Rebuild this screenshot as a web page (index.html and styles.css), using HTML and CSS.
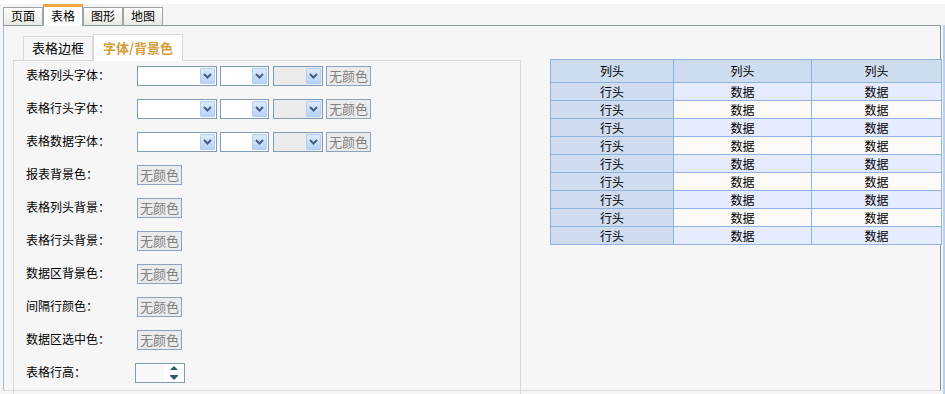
FILE: index.html
```html
<!DOCTYPE html>
<html lang="zh-CN">
<head>
<meta charset="UTF-8">
<title>表格设置</title>
<link rel="stylesheet" href="styles.css">
</head>
<body>

<!-- TOP TABS -->
<div class="tabs">
  <div class="tab">页面</div>
  <div class="tab active">表格</div>
  <div class="tab">图形</div>
  <div class="tab">地图</div>
</div>

<div class="panel">
  <!-- SETTINGS -->
  <div class="left">
    <div class="subtabs">
      <div class="subtab">表格边框</div>
      <div class="subtab active">字体/背景色</div>
    </div>
    <div class="form">
      <div class="row">
        <span class="label">表格列头字体：</span>
        <div class="sel w80"><span class="arrow"><svg width="9" height="6" viewBox="0 0 9 6"><polyline points="1,1 4.5,4.5 8,1" fill="none" stroke="#4a5d80" stroke-width="2"/></svg></span></div>
        <div class="sel w48"><span class="arrow"><svg width="9" height="6" viewBox="0 0 9 6"><polyline points="1,1 4.5,4.5 8,1" fill="none" stroke="#4a5d80" stroke-width="2"/></svg></span></div>
        <div class="sel w49 off"><span class="arrow"><svg width="9" height="6" viewBox="0 0 9 6"><polyline points="1,1 4.5,4.5 8,1" fill="none" stroke="#4a5d80" stroke-width="2"/></svg></span></div>
        <button class="nocolor gap">无颜色</button>
      </div>
      <div class="row">
        <span class="label">表格行头字体：</span>
        <div class="sel w80"><span class="arrow"><svg width="9" height="6" viewBox="0 0 9 6"><polyline points="1,1 4.5,4.5 8,1" fill="none" stroke="#4a5d80" stroke-width="2"/></svg></span></div>
        <div class="sel w48"><span class="arrow"><svg width="9" height="6" viewBox="0 0 9 6"><polyline points="1,1 4.5,4.5 8,1" fill="none" stroke="#4a5d80" stroke-width="2"/></svg></span></div>
        <div class="sel w49 off"><span class="arrow"><svg width="9" height="6" viewBox="0 0 9 6"><polyline points="1,1 4.5,4.5 8,1" fill="none" stroke="#4a5d80" stroke-width="2"/></svg></span></div>
        <button class="nocolor gap">无颜色</button>
      </div>
      <div class="row">
        <span class="label">表格数据字体：</span>
        <div class="sel w80"><span class="arrow"><svg width="9" height="6" viewBox="0 0 9 6"><polyline points="1,1 4.5,4.5 8,1" fill="none" stroke="#4a5d80" stroke-width="2"/></svg></span></div>
        <div class="sel w48"><span class="arrow"><svg width="9" height="6" viewBox="0 0 9 6"><polyline points="1,1 4.5,4.5 8,1" fill="none" stroke="#4a5d80" stroke-width="2"/></svg></span></div>
        <div class="sel w49 off"><span class="arrow"><svg width="9" height="6" viewBox="0 0 9 6"><polyline points="1,1 4.5,4.5 8,1" fill="none" stroke="#4a5d80" stroke-width="2"/></svg></span></div>
        <button class="nocolor gap">无颜色</button>
      </div>
      <div class="row"><span class="label">报表背景色：</span><button class="nocolor">无颜色</button></div>
      <div class="row"><span class="label">表格列头背景：</span><button class="nocolor">无颜色</button></div>
      <div class="row"><span class="label">表格行头背景：</span><button class="nocolor">无颜色</button></div>
      <div class="row"><span class="label">数据区背景色：</span><button class="nocolor">无颜色</button></div>
      <div class="row"><span class="label">间隔行颜色：</span><button class="nocolor">无颜色</button></div>
      <div class="row"><span class="label">数据区选中色：</span><button class="nocolor">无颜色</button></div>
      <div class="row">
        <span class="label short">表格行高：</span>
        <div class="spin">
          <span class="spin-field"></span>
          <svg class="spin-btn" width="20" height="18" viewBox="0 0 20 18">
            <polygon points="6,6 10,2 14,6" fill="#2b5d62"/>
            <rect x="6" y="11" width="8" height="1" fill="#2b5d62"/>
            <polygon points="6,12 14,12 10,16" fill="#2b5d62"/>
          </svg>
        </div>
      </div>
    </div>
  </div>

  <!-- PREVIEW -->
  <div class="preview">
    <table class="grid">
      <tr><th class="c1">列头</th><th class="c2">列头</th><th class="c3">列头</th></tr>
      <tr class="odd"><td class="rh">行头</td><td>数据</td><td>数据</td></tr>
      <tr class="even"><td class="rh">行头</td><td>数据</td><td>数据</td></tr>
      <tr class="odd"><td class="rh">行头</td><td>数据</td><td>数据</td></tr>
      <tr class="even"><td class="rh">行头</td><td>数据</td><td>数据</td></tr>
      <tr class="odd"><td class="rh">行头</td><td>数据</td><td>数据</td></tr>
      <tr class="even"><td class="rh">行头</td><td>数据</td><td>数据</td></tr>
      <tr class="odd"><td class="rh">行头</td><td>数据</td><td>数据</td></tr>
      <tr class="even"><td class="rh">行头</td><td>数据</td><td>数据</td></tr>
      <tr class="odd"><td class="rh">行头</td><td>数据</td><td>数据</td></tr>
    </table>
  </div>
</div>

</body>
</html>
```

FILE: styles.css
```css
* { box-sizing: border-box; }
body {
  margin: 0;
  width: 945px;
  height: 394px;
  overflow: hidden;
  font-family: "Noto Sans CJK SC", "Noto Sans", sans-serif;
  font-size: 12px;
  color: #000;
  background: linear-gradient(to left, #b9d0e8 2px, #f5f5f5 2px);
}
.tabs {
  display: flex;
  height: 25px;
  padding: 4px 0 0 3px;
  background: linear-gradient(#ffffff 4px, #f5f5f5 4px);
  position: relative;
  z-index: 2;
}
.tab {
  width: 40px;
  height: 18px;
  margin-top: 3px;
  border: 1px solid #9ea5a5;
  border-bottom: none;
  background: linear-gradient(#fdfdfd, #e9e9e4);
  text-align: center;
  line-height: 16px;
}
.tab.active {
  height: 22px;
  margin-top: 0;
  border-top: 3px solid #f2a93b;
  background: #fff;
  line-height: 17px;
}
.panel {
  display: flex;
  width: 938px;
  height: 366px;
  margin-left: 3px;
  padding-left: 9px;
  border-top: 1px solid #8e9c9c;
  border-left: 1px solid #a6bdd6;
  border-right: 1px solid #8a9595;
  border-bottom: 1px solid #dcdcdc;
  background: #f6f6f6;
}
.left {
  flex-shrink: 0;
  width: 508px;
  display: flex;
  flex-direction: column;
  padding-top: 8px;
}
.subtabs {
  display: flex;
  height: 26px;
  padding-left: 10px;
  position: relative;
  z-index: 1;
}
.subtab {
  width: 70px;
  height: 24px;
  margin-top: 2px;
  border: 1px solid #d3d9e1;
  border-bottom: none;
  text-align: center;
  line-height: 22px;
  font-size: 13px;
}
.subtab.active {
  width: 90px;
  height: 27px;
  margin-top: 0;
  background: #fff;
  color: #d39c35;
  font-weight: bold;
  line-height: 25px;
}
.form {
  flex: 1;
  border: 1px solid #d4d8e0;
  border-bottom: none;
  padding: 5px 0 0 12px;
}
.row {
  display: flex;
  align-items: center;
  height: 20px;
  margin-bottom: 13px;
}
.label {
  width: 111px;
  font-size: 12px;
  line-height: 16px;
  margin-top: -2px;
}
.label.short { width: 109px; }
.sel {
  height: 20px;
  border: 1px solid #7f9db9;
  background: #fff;
  display: flex;
  justify-content: flex-end;
  align-items: center;
  padding-right: 1px;
}
.sel.off { background: #ebebeb; }
.w80 { width: 80px; margin-right: 3px; }
.w48 { width: 49px; margin-right: 4px; }
.w49 { width: 50px; }
.arrow {
  width: 15px;
  height: 16px;
  border: 1px solid #b4cdef;
  border-radius: 1px;
  background: linear-gradient(#dbeafd, #b7d3fa);
  display: flex;
  align-items: center;
  justify-content: center;
}
.nocolor {
  width: 45px;
  height: 20px;
  padding: 0;
  border: 1px solid #8ea3bb;
  background: #ebebeb;
  color: #818181;
  font-family: inherit;
  font-size: 13px;
  line-height: 18px;
}
.nocolor.gap { margin-left: 3px; }
.spin {
  display: flex;
  width: 50px;
  height: 20px;
  border: 1px solid #7f9db9;
  background: #fff;
}
.spin-field {
  width: 28px;
  background: #f8f8f8;
}
.preview {
  flex-shrink: 0;
  padding: 33px 0 0 29px;
}
.grid {
  border-collapse: collapse;
  table-layout: fixed;
  width: 391px;
  font-size: 12px;
}
.grid th, .grid td {
  border: 1px solid #8db3e2;
  padding: 0;
  text-align: center;
  font-weight: normal;
  line-height: 14px;
}
.grid th {
  height: 23px;
  background: #cedcef;
}
.grid td { height: 18px; }
.c1 { width: 123px; }
.c2 { width: 138px; }
.c3 { width: 130px; }
.grid td.rh { background: #cfdcef; }
.odd td { background: #e6ebfe; }
.even td { background: #fbfaf7; }
```
